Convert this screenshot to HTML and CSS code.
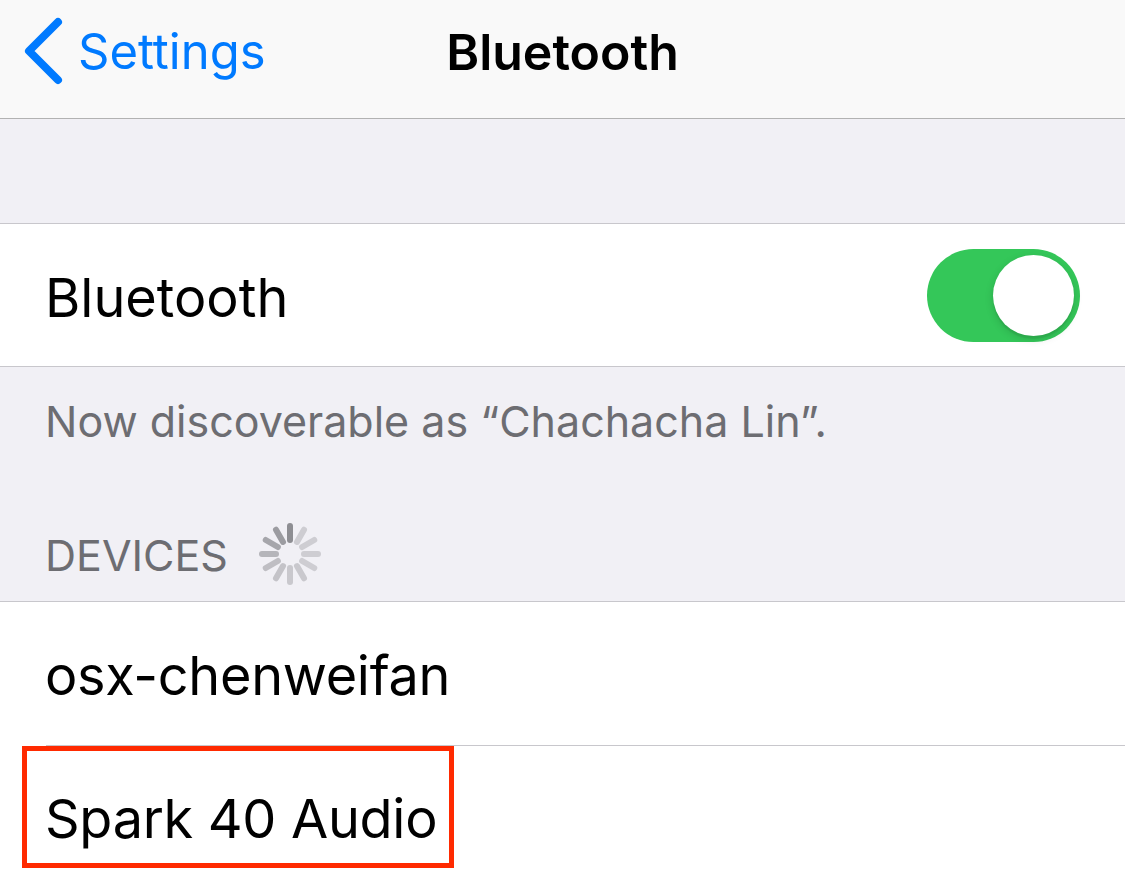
FILE: index.html
```html
<!DOCTYPE html>
<html lang="en">
<head>
<meta charset="utf-8">
<title>Bluetooth</title>
<link rel="stylesheet" href="styles.css">
</head>
<body>
<div class="screen">
  <header class="navbar">
    <div class="back">
      <svg class="chevron" width="44" height="70" viewBox="0 0 44 70">
        <polyline points="34,5 5,34 34,63" fill="none" stroke="#007aff" stroke-width="8" stroke-linecap="round" stroke-linejoin="round"/>
      </svg>
      <span class="back-label">Settings</span>
    </div>
    <div class="title">Bluetooth</div>
  </header>

  <div class="spacer"></div>

  <section class="group">
    <div class="row">
      <span class="row-label">Bluetooth</span>
      <div class="toggle"><div class="knob"></div></div>
    </div>
  </section>

  <div class="footer-note">Now discoverable as “Chachacha Lin”.</div>

  <div class="section-header">
    <span>DEVICES</span>
    <svg class="spinner" width="68" height="68" viewBox="-34 -34 68 68">
      <g stroke="#8e8e93" stroke-width="6" stroke-linecap="round">
        <line x1="0" y1="-14" x2="0" y2="-28" opacity="1"/>
        <line x1="0" y1="-14" x2="0" y2="-28" transform="rotate(30)" opacity="0.35"/>
        <line x1="0" y1="-14" x2="0" y2="-28" transform="rotate(60)" opacity="0.35"/>
        <line x1="0" y1="-14" x2="0" y2="-28" transform="rotate(90)" opacity="0.35"/>
        <line x1="0" y1="-14" x2="0" y2="-28" transform="rotate(120)" opacity="0.35"/>
        <line x1="0" y1="-14" x2="0" y2="-28" transform="rotate(150)" opacity="0.4"/>
        <line x1="0" y1="-14" x2="0" y2="-28" transform="rotate(180)" opacity="0.4"/>
        <line x1="0" y1="-14" x2="0" y2="-28" transform="rotate(210)" opacity="0.45"/>
        <line x1="0" y1="-14" x2="0" y2="-28" transform="rotate(240)" opacity="0.5"/>
        <line x1="0" y1="-14" x2="0" y2="-28" transform="rotate(270)" opacity="0.6"/>
        <line x1="0" y1="-14" x2="0" y2="-28" transform="rotate(300)" opacity="0.75"/>
        <line x1="0" y1="-14" x2="0" y2="-28" transform="rotate(330)" opacity="0.85"/>
      </g>
    </svg>
  </div>

  <section class="group devices">
    <div class="row device">
      <span class="row-label">osx-chenweifan</span>
    </div>
    <div class="row device highlighted">
      <span class="row-label">Spark 40 Audio</span>
      <div class="highlight-box"></div>
    </div>
  </section>
</div>
</body>
</html>
```

FILE: styles.css
```css
* { box-sizing: border-box; }

html, body {
  margin: 0;
  padding: 0;
  background: #f1f0f5;
}

body {
  font-family: "Inter", "Roboto", "Liberation Sans", sans-serif;
  color: #000;
  width: 1125px;
  height: 869px;
  overflow: hidden;
}

.screen {
  display: flex;
  flex-direction: column;
  width: 1125px;
}

.navbar {
  position: relative;
  height: 119px;
  background: #f9f9f9;
  border-bottom: 1px solid #b2b2b2;
  display: flex;
  align-items: center;
  justify-content: center;
}

.back {
  position: absolute;
  left: 24px;
  top: 17px;
  display: flex;
  align-items: center;
  gap: 10px;
  color: #007aff;
}

.back-label {
  font-size: 49px;
  line-height: 70px;
}

.title {
  font-size: 50px;
  font-weight: 600;
  margin-top: -15px;
}

.spacer {
  height: 104px;
}

.group {
  background: #fff;
  border-top: 1px solid #c8c7cc;
  border-bottom: 1px solid #c8c7cc;
}

.row {
  position: relative;
  height: 142px;
  display: flex;
  align-items: center;
  justify-content: space-between;
  padding: 0 45px 0 45px;
}

.row-label {
  font-size: 54px;
  padding-top: 4px;
}

.device .row-label {
  letter-spacing: -0.3px;
}

.toggle {
  width: 153px;
  height: 93px;
  border-radius: 47px;
  background: #34c759;
  padding: 6px;
  display: flex;
  justify-content: flex-end;
}

.knob {
  width: 81px;
  height: 81px;
  border-radius: 50%;
  background: #fff;
  box-shadow: 0 3px 8px rgba(0, 0, 0, 0.15), 0 3px 1px rgba(0, 0, 0, 0.06);
}

.footer-note {
  height: 130px;
  padding: 28px 45px 0;
  font-size: 43px;
  color: #6d6d72;
}

.section-header {
  height: 104px;
  display: flex;
  align-items: center;
  gap: 28px;
  padding: 12px 45px 0 45px;
  font-size: 43px;
  color: #6d6d72;
}

.spinner {
  margin-top: -2px;
}

.devices {
  border-bottom: none;
}

.device {
  height: 143px;
}

.device + .device::before {
  content: "";
  position: absolute;
  left: 46px;
  right: 0;
  top: 0;
  border-top: 1px solid #c8c7cc;
}

.highlighted {
  height: 124px;
}

.highlighted .row-label {
  padding-top: 22px;
}

.highlight-box {
  position: absolute;
  left: 22px;
  top: 1px;
  width: 432px;
  height: 122px;
  border: 5px solid #ff2a00;
}
```
